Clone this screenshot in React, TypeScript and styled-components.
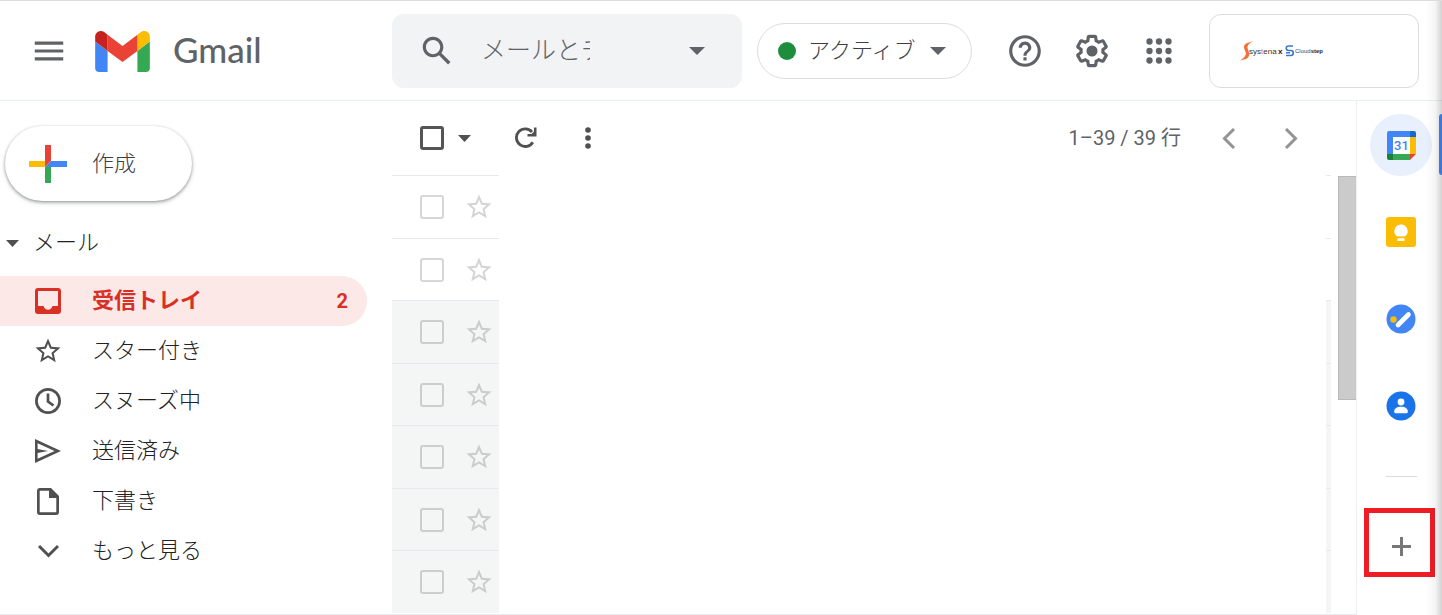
import React from 'react';
import styled, { createGlobalStyle } from 'styled-components';

const GlobalStyle = createGlobalStyle`
  *, *::before, *::after { box-sizing: border-box; }
  body {
    margin: 0;
    background: #fff;
    color: #202124;
    font-family: Roboto, "Noto Sans CJK JP", sans-serif;
    font-size: 22px;
    line-height: 32px;
    overflow: hidden;
  }
  button, input { font: inherit; color: inherit; }
  svg { display: block; flex: none; }
`;

const Page = styled.div`
  position: relative;
  display: flex;
  flex-direction: column;
  min-height: 100vh;
`;

const Header = styled.header`
  display: flex;
  align-items: center;
  padding: 13px 23px 12px 0;
  border-top: 1px solid #dadce0;
  border-bottom: 1px solid #e8eef3;
`;

const Brand = styled.div`
  display: flex;
  align-items: center;
  flex: none;
  width: 392px;
  padding-left: 30px;
`;

const IconButton = styled.button<{ $size?: number; $color?: string }>`
  display: flex;
  align-items: center;
  justify-content: center;
  flex: none;
  width: ${(p) => p.$size ?? 38}px;
  height: ${(p) => p.$size ?? 38}px;
  padding: 0;
  border: 0;
  background: none;
  color: ${(p) => p.$color ?? '#5f6368'};
  cursor: pointer;
`;

const HomeLink = styled.a`
  display: flex;
  align-items: center;
  gap: 23px;
  margin-left: 27px;
  color: #5f6368;
  font-family: Lato, sans-serif;
  font-size: 35px;
  font-weight: 500;
  line-height: 36px;
  text-decoration: none;
`;

const Wordmark = styled.span`
  padding-bottom: 4px;
`;

const SearchForm = styled.form`
  display: flex;
  align-items: center;
  flex: 1 1 0;
  min-width: 250px;
  height: 74px;
  padding: 0 26px;
  border-radius: 12px;
  background: #f1f3f4;
`;

const SearchInput = styled.input`
  flex: 1 1 0;
  min-width: 0;
  margin: 0 88px 0 25px;
  padding: 0;
  border: 0;
  outline: 0;
  background: none;
  font-size: 25px;
  font-weight: 300;
  line-height: 36px;
  &::placeholder { color: #5f6368; opacity: 1; }
`;

const StatusButton = styled.button`
  display: flex;
  align-items: center;
  flex: none;
  width: 215px;
  height: 56px;
  margin-left: 15px;
  padding: 0 0 0 20px;
  border: 1px solid #dadce0;
  border-radius: 28px;
  background: #fff;
  color: #3c4043;
  font-weight: 300;
  white-space: nowrap;
  cursor: pointer;
`;

const StatusDot = styled.span`
  width: 18px;
  height: 18px;
  margin-right: 12px;
  border-radius: 50%;
  background: #1e8e3e;
`;

const StatusLabel = styled.span`
  margin-right: 14px;
`;

const HeaderTools = styled.div`
  display: flex;
  gap: 29px;
  margin: 0 31px 0 34px;
`;

const Account = styled.button`
  display: flex;
  align-items: center;
  flex: none;
  width: 210px;
  height: 74px;
  padding: 0 0 0 30px;
  border: 1px solid #dadce0;
  border-radius: 12px;
  background: #fff;
  cursor: pointer;
`;

const Body = styled.div`
  display: flex;
  flex: 1;
`;

const Content = styled.div`
  display: flex;
  flex: 1;
  min-width: 0;
  border-bottom: 1px solid #e8eaed;
`;

const Sidebar = styled.nav`
  flex: none;
  width: 392px;
  padding-top: 25px;
`;

const ComposeButton = styled.button`
  display: flex;
  align-items: center;
  gap: 25px;
  width: 187px;
  height: 75px;
  margin-left: 5px;
  padding: 0 0 0 24px;
  border: 0;
  border-radius: 38px;
  background: #fff;
  color: #3c4043;
  font-weight: 300;
  box-shadow: 0 1px 3px rgba(60, 64, 67, 0.4), 0 2px 4px rgba(60, 64, 67, 0.25);
  cursor: pointer;
`;

const GroupButton = styled.button`
  display: flex;
  align-items: center;
  gap: 14px;
  margin: 26px 0 17px;
  padding: 0 0 0 6px;
  border: 0;
  background: none;
  font-weight: 300;
  cursor: pointer;
`;

const FolderList = styled.ul`
  margin: 0;
  padding: 0;
  list-style: none;
`;

const FolderLink = styled.a<{ $active?: boolean }>`
  display: flex;
  align-items: center;
  width: 367px;
  height: 50px;
  padding-right: 19px;
  border-radius: 0 25px 25px 0;
  background: ${(p) => (p.$active ? '#fce8e6' : 'none')};
  color: ${(p) => (p.$active ? '#d93025' : '#202124')};
  font-weight: ${(p) => (p.$active ? 700 : 300)};
  text-decoration: none;
`;

const FolderIcon = styled.span<{ $active?: boolean }>`
  display: flex;
  justify-content: center;
  width: 32px;
  margin: 0 28px 0 32px;
  color: ${(p) => (p.$active ? '#d93025' : '#505050')};
`;

const FolderCount = styled.span`
  margin-left: auto;
  font-size: 20px;
`;

const MailPane = styled.main`
  flex: 1;
  min-width: 0;
`;

const Toolbar = styled.div`
  display: flex;
  align-items: center;
  height: 74px;
  padding: 0 46px 0 28px;
  color: #5f6368;
`;

const CheckBox = styled.input<{ $strong?: boolean }>`
  appearance: none;
  flex: none;
  width: 24px;
  height: 24px;
  margin: 0;
  border: ${(p) => (p.$strong ? '3px solid #555' : '2px solid rgba(0, 0, 0, 0.16)')};
  border-radius: 3px;
  cursor: pointer;
`;

const Pager = styled.div`
  display: flex;
  align-items: center;
  gap: 24px;
  margin-left: auto;
`;

const PageRange = styled.span`
  margin-right: 5px;
  font-size: 20px;
  white-space: nowrap;
`;

const ListArea = styled.div`
  display: flex;
  align-items: flex-start;
`;

const MailList = styled.ul`
  flex: 1;
  margin: 0 7px 0 0;
  padding: 0;
  list-style: none;
`;

const MailRow = styled.li`
  display: flex;
  justify-content: space-between;
  height: 63px;
  &:nth-child(even) { height: 62px; }
`;

const RowControls = styled.div<{ $read?: boolean }>`
  display: flex;
  align-items: center;
  gap: 20px;
  width: 107px;
  padding-left: 28px;
  border-top: 1px solid #e6eaee;
  background: ${(p) => (p.$read ? '#f4f6f6' : '#fff')};
`;

const RowEdge = styled.div<{ $read?: boolean }>`
  width: 5px;
  border-top: 1px solid #e6eaee;
  background: ${(p) => (p.$read ? '#f4f6f6' : '#fff')};
`;

const ScrollThumb = styled.div`
  width: 18px;
  height: 224px;
  margin-top: 1px;
  border: 1px solid #b8b8b8;
  border-right: 0;
  background: #cbcbcb;
`;

const SidePanel = styled.aside`
  display: flex;
  flex-direction: column;
  align-items: center;
  flex: none;
  width: 86px;
  padding: 13px 0 0 3px;
  border-left: 1px solid #eceff1;
`;

const AppList = styled.div`
  display: flex;
  flex-direction: column;
  gap: 25px;
`;

const AppButton = styled(IconButton)<{ $active?: boolean }>`
  border-radius: 50%;
  background: ${(p) => (p.$active ? '#e8f0fe' : 'none')};
`;

const PanelDivider = styled.hr`
  width: 31px;
  margin: 39px 0 38px;
  border: 0;
  border-top: 1px solid #dadce0;
`;

const AddSlot = styled.div`
  position: relative;
`;

const Highlight = styled.span`
  position: absolute;
  top: -7px;
  left: -6px;
  width: 71px;
  height: 69px;
  border: 5px solid #ee1c24;
  pointer-events: none;
`;

const EdgeShade = styled.div`
  position: absolute;
  top: 1px;
  right: 0;
  bottom: 0;
  width: 17px;
  background: linear-gradient(to right, rgba(0, 0, 0, 0), rgba(0, 0, 0, 0.04) 60%, rgba(0, 0, 0, 0.18));
  pointer-events: none;
`;

const EdgeTab = styled.div`
  position: absolute;
  top: 114px;
  right: 0;
  width: 3px;
  height: 61px;
  border-radius: 3px 0 0 3px;
  background: #3c78dc;
`;

const Caret = ({ w, h, color = '#5f6368' }: { w: number; h: number; color?: string }) => (
  <svg width={w} height={h} viewBox="0 0 10 5" preserveAspectRatio="none" fill={color} aria-hidden="true">
    <path d="M0 0h10L5 5z" />
  </svg>
);

const Glyph = ({ d, size = 38 }: { d: string; size?: number }) => (
  <svg width={size} height={size} viewBox="0 0 24 24" fill="currentColor" aria-hidden="true">
    <path d={d} />
  </svg>
);

const MENU = 'M3 18h18v-2H3v2zm0-5h18v-2H3v2zm0-7v2h18V6H3z';
const SEARCH =
  'M20.49 19l-5.73-5.73C15.53 12.2 16 10.91 16 9.5 16 5.91 13.09 3 9.5 3S3 5.91 3 9.5 5.91 16 9.5 16c1.41 0 2.7-.47 3.77-1.24L19 20.49 20.49 19zM5 9.5C5 7.01 7.01 5 9.5 5S14 7.01 14 9.5 11.99 14 9.5 14 5 11.99 5 9.5z';
const HELP =
  'M11 18h2v-2h-2v2zm1-16C6.48 2 2 6.48 2 12s4.48 10 10 10 10-4.48 10-10S17.52 2 12 2zm0 18c-4.41 0-8-3.59-8-8s3.59-8 8-8 8 3.59 8 8-3.59 8-8 8zm0-14c-2.21 0-4 1.79-4 4h2c0-1.1.9-2 2-2s2 .9 2 2c0 2-3 1.75-3 5h2c0-2.25 3-2.5 3-5 0-2.21-1.79-4-4-4z';
const GEAR =
  'M13.85 22.25h-3.7c-.74 0-1.36-.54-1.45-1.27l-.27-1.89c-.27-.14-.53-.29-.79-.46l-1.8.72c-.7.26-1.47-.03-1.81-.65L2.2 15.53c-.35-.66-.2-1.44.36-1.88l1.53-1.19c-.01-.15-.02-.3-.02-.46 0-.15.01-.31.02-.46l-1.52-1.19c-.59-.45-.74-1.26-.37-1.88l1.85-3.19c.34-.62 1.11-.9 1.79-.63l1.81.73c.26-.17.52-.32.78-.46l.27-1.91c.09-.7.71-1.25 1.44-1.25h3.7c.74 0 1.36.54 1.45 1.27l.27 1.89c.27.14.53.29.79.46l1.8-.72c.71-.26 1.48.03 1.82.65l1.84 3.18c.36.66.2 1.44-.36 1.88l-1.52 1.19c.01.15.02.3.02.46s-.01.31-.02.46l1.52 1.19c.56.45.72 1.23.37 1.86l-1.86 3.22c-.34.62-1.11.9-1.8.63l-1.8-.72c-.26.17-.52.32-.78.46l-.27 1.91c-.1.68-.72 1.22-1.46 1.22zm-3.23-2h2.76l.37-2.55.53-.22c.44-.18.88-.44 1.34-.78l.45-.34 2.38.96 1.38-2.4-2.03-1.58.07-.56c.03-.26.06-.51.06-.78s-.03-.53-.06-.78l-.07-.56 2.03-1.58-1.39-2.4-2.39.96-.45-.35c-.42-.32-.87-.58-1.33-.77l-.52-.22-.37-2.55h-2.76l-.37 2.55-.53.21c-.44.19-.88.44-1.34.79l-.45.33-2.38-.95-1.39 2.39 2.03 1.58-.07.56a7 7 0 0 0-.06.79c0 .26.02.53.06.78l.07.56-2.03 1.58 1.38 2.4 2.39-.96.45.35c.43.33.86.58 1.33.77l.53.22.38 2.55zM12 8.5a3.5 3.5 0 1 0 0 7 3.5 3.5 0 0 0 0-7z';
const APPS = [6, 12, 18]
  .flatMap((y) => [6, 12, 18].map((x) => `M${x - 2} ${y}a2 2 0 1 0 4 0a2 2 0 1 0-4 0z`))
  .join('');
const STAR =
  'M22 9.24l-7.19-.62L12 2 9.19 8.63 2 9.24l5.46 4.73L5.82 21 12 17.27 18.18 21l-1.63-7.03L22 9.24zM12 15.4l-3.76 2.27 1-4.28-3.32-2.88 4.38-.38L12 6.1l1.71 4.04 4.38.38-3.32 2.88 1 4.28L12 15.4z';

const GmailMark = () => (
  <svg width="55" height="41" viewBox="52 42 88 66" aria-hidden="true">
    <path fill="#4285f4" d="M58 108h14V74L52 59v43c0 3.32 2.69 6 6 6" />
    <path fill="#34a853" d="M120 108h14c3.32 0 6-2.69 6-6V59l-20 15" />
    <path fill="#fbbc04" d="M120 48v26l20-15v-8c0-7.42-8.47-11.65-14.4-7.2" />
    <path fill="#ea4335" d="M72 74V48l24 18 24-18v26L96 92" />
    <path fill="#c5221f" d="M52 51v8l20 15V48l-5.6-4.2c-5.94-4.45-14.4-.22-14.4 7.2" />
  </svg>
);

const ComposePlus = () => (
  <svg width="38" height="38" viewBox="0 0 38 38" aria-hidden="true">
    <path fill="#ea4335" d="M16 0h6v16l-6 6z" />
    <path fill="#fbbc04" d="M0 16h16v6H0z" />
    <path fill="#4285f4" d="M22 16h16v6H16z" />
    <path fill="#34a853" d="M16 22h6v16h-6z" />
  </svg>
);

const InboxIcon = () => (
  <svg width="26" height="26" viewBox="0 0 26 26" fill="currentColor" fillRule="evenodd" aria-hidden="true">
    <path d="M3 0h20a3 3 0 0 1 3 3v20a3 3 0 0 1-3 3H3a3 3 0 0 1-3-3V3a3 3 0 0 1 3-3zM3 3v15h5.5c.6 2.4 2.3 3.8 4.5 3.8s3.9-1.4 4.5-3.8H23V3z" />
  </svg>
);

const ClockIcon = () => (
  <svg width="26" height="26" viewBox="0 0 26 26" fill="none" stroke="currentColor" strokeWidth="2.7" aria-hidden="true">
    <circle cx="13" cy="13" r="11.6" />
    <path d="M13 5.5v8l5.5 4" />
  </svg>
);

const SendIcon = () => (
  <svg width="28" height="24" viewBox="0 0 28 24" fill="currentColor" fillRule="evenodd" aria-hidden="true">
    <path d="M1 0l26 12L1 24zM3.6 4.2v5.900L14 12 3.600 13.900v5.900L20.600 12z" />
  </svg>
);

const FileIcon = () => (
  <svg width="22" height="27" viewBox="0 0 22 27" fill="currentColor" fillRule="evenodd" aria-hidden="true">
    <path d="M3 0h11l8 8v16a3 3 0 0 1-3 3H3a3 3 0 0 1-3-3V3a3 3 0 0 1 3-3zM2.700 2.700v21.600h16.600V10H12V2.700z" />
  </svg>
);

const Chevron = ({ d, w, h, stroke = 3 }: { d: string; w: number; h: number; stroke?: number }) => (
  <svg width={w} height={h} viewBox={`0 0 ${w} ${h}`} fill="none" stroke="currentColor" strokeWidth={stroke} aria-hidden="true">
    <path d={d} />
  </svg>
);

const RefreshIcon = () => (
  <svg width="22" height="22" viewBox="0 0 22 22" aria-hidden="true">
    <path d="M17.8 15.2A8.8 8.8 0 1 1 17 5" fill="none" stroke="currentColor" strokeWidth="2.8" />
    <path d="M21.5 .5v9h-9V7h4l2.500-2.500v-4z" fill="currentColor" />
  </svg>
);

const MoreIcon = () => (
  <svg width="22" height="22" viewBox="0 0 22 22" fill="currentColor" aria-hidden="true">
    <circle cx="11" cy="3" r="2.8" />
    <circle cx="11" cy="11" r="2.8" />
    <circle cx="11" cy="19" r="2.8" />
  </svg>
);

const CompanyLogo = () => (
  <svg width="90" height="22" viewBox="0 0 90 22" role="img" aria-label="systena x Cloudstep">
    <path fill="#f4703a" d="M13 1L6 3.500C3.500 5 3.500 8 5 10.500L6 13.500C5.500 16 4 18 0 20.500l6-1.500c3.500-1.500 4-5 2.500-8L7.500 8C7 5.500 9 3.500 13 1z" />
    <text x="9" y="14" fontFamily="'Liberation Sans', sans-serif" fontSize="8" fill="#333">
      sys<tspan fill="#f4703a">t</tspan>ena
    </text>
    <text x="38" y="14" fontFamily="'Liberation Sans', sans-serif" fontSize="8" fontWeight="700" fill="#222">
      x
    </text>
    <path fill="none" stroke="#3c78c0" strokeWidth="1.6" d="M53 6h-4.500c-3 0-3 4.500 0 4.500H51c3 0 3 5 0 5h-5M46 12.800h4" />
    <text x="55" y="13" fontFamily="'Liberation Sans', sans-serif" fontSize="6" fill="#3b4a66">
      Cloud<tspan fontWeight="700" fill="#1c2740">step</tspan>
    </text>
  </svg>
);

const CalendarIcon = () => (
  <svg width="29" height="29" viewBox="0 0 29 29" aria-hidden="true">
    <path fill="#fff" d="M5 5h18v18H5z" />
    <path fill="#4285f4" d="M2 0h21v6H6v17H0V2a2 2 0 0 1 2-2z" />
    <path fill="#1967d2" d="M23 0h4a2 2 0 0 1 2 2v4h-6z" />
    <path fill="#fbbc04" d="M23 6h6v17h-6z" />
    <path fill="#34a853" d="M6 23h17v6H6z" />
    <path fill="#188038" d="M0 23h6v6H2a2 2 0 0 1-2-2z" />
    <path fill="#ea4335" d="M23 23h6l-6 6z" />
    <text x="14.5" y="19" textAnchor="middle" fontFamily="Roboto, sans-serif" fontSize="13" fontWeight="500" fill="#4285f4">
      31
    </text>
  </svg>
);

const KeepIcon = () => (
  <svg width="30" height="30" viewBox="0 0 30 30" aria-hidden="true">
    <rect width="30" height="30" rx="3" fill="#fbbc04" />
    <path fill="#fff" d="M15 7.500a6.600 6.600 0 0 0-3.500 12.200h7A6.600 6.600 0 0 0 15 7.500zM11.500 21.300h7v2.700h-7z" />
    <path fill="#fbbc04" d="M11 19.500h8v1.300h-8z" />
  </svg>
);

const TasksIcon = () => (
  <svg width="30" height="30" viewBox="0 0 30 30" aria-hidden="true">
    <circle cx="15" cy="15" r="14.5" fill="#4285f4" />
    <circle cx="7.5" cy="15.5" r="3.2" fill="#fbbc04" />
    <path d="M12 21L22.500 10.500" stroke="#fff" strokeWidth="4.6" strokeLinecap="round" />
  </svg>
);

const ContactsIcon = () => (
  <svg width="30" height="30" viewBox="0 0 30 30" aria-hidden="true">
    <circle cx="15" cy="15" r="14.5" fill="#1a73e8" />
    <circle cx="15" cy="11" r="3.4" fill="#fff" />
    <path fill="#fff" d="M8.200 20.500c0-3.300 3.500-4.700 6.800-4.700s6.800 1.400 6.800 4.700c0 1-.6 1.800-1.600 1.800H9.800c-1 0-1.600-.8-1.600-1.800z" />
  </svg>
);

const folders = [
  { label: '受信トレイ', icon: <InboxIcon />, count: 2 },
  { label: 'スター付き', icon: <Glyph d={STAR} size={30} /> },
  { label: 'スヌーズ中', icon: <ClockIcon /> },
  { label: '送信済み', icon: <SendIcon /> },
  { label: '下書き', icon: <FileIcon /> },
  { label: 'もっと見る', icon: <Chevron d="M1 2l9.500 9.500L20 2" w={21} h={14} /> },
];

const apps = [
  { label: 'カレンダー', icon: <CalendarIcon /> },
  { label: 'Keep', icon: <KeepIcon /> },
  { label: 'ToDo リスト', icon: <TasksIcon /> },
  { label: '連絡先', icon: <ContactsIcon /> },
];

const mailRows = [false, false, true, true, true, true, true];

export default function App() {
  return (
    <Page>
      <GlobalStyle />
      <Header>
        <Brand>
          <IconButton aria-label="メインメニュー"><Glyph d={MENU} /></IconButton>
          <HomeLink href="#">
            <GmailMark />
            <Wordmark>Gmail</Wordmark>
          </HomeLink>
        </Brand>
        <SearchForm role="search">
          <IconButton type="button" aria-label="検索"><Glyph d={SEARCH} /></IconButton>
          <SearchInput type="text" placeholder="メールとチャットを検索" aria-label="メールとチャットを検索" />
          <IconButton type="button" aria-label="検索オプション" $size={38}><Caret w={16} h={8} /></IconButton>
        </SearchForm>
        <StatusButton>
          <StatusDot />
          <StatusLabel>アクティブ</StatusLabel>
          <Caret w={16} h={8} />
        </StatusButton>
        <HeaderTools>
          <IconButton aria-label="サポート"><Glyph d={HELP} /></IconButton>
          <IconButton aria-label="設定"><Glyph d={GEAR} /></IconButton>
          <IconButton aria-label="アプリ"><Glyph d={APPS} /></IconButton>
        </HeaderTools>
        <Account><CompanyLogo /></Account>
      </Header>
      <Body>
        <Content>
          <Sidebar>
            <ComposeButton><ComposePlus />作成</ComposeButton>
            <GroupButton><Caret w={13} h={7} color="#505050" />メール</GroupButton>
            <FolderList>
              {folders.map((f, i) => (
                <li key={f.label}>
                  <FolderLink href="#" $active={i === 0}>
                    <FolderIcon $active={i === 0}>{f.icon}</FolderIcon>
                    {f.label}
                    {f.count && <FolderCount>{f.count}</FolderCount>}
                  </FolderLink>
                </li>
              ))}
            </FolderList>
          </Sidebar>
          <MailPane>
            <Toolbar>
              <CheckBox type="checkbox" $strong aria-label="すべて選択" />
              <IconButton $size={40} aria-label="選択"><Caret w={13} h={7} color="#505050" /></IconButton>
              <IconButton $size={84} $color="#505050" aria-label="更新"><RefreshIcon /></IconButton>
              <IconButton $size={40} $color="#505050" aria-label="その他"><MoreIcon /></IconButton>
              <Pager>
                <PageRange>1–39 / 39 行</PageRange>
                <IconButton $color="#949494" aria-label="前へ"><Chevron d="M12 1l-9.500 9.500L12 20" w={14} h={21} /></IconButton>
                <IconButton $color="#949494" aria-label="次へ"><Chevron d="M2 1l9.500 9.500L2 20" w={14} h={21} /></IconButton>
              </Pager>
            </Toolbar>
            <ListArea>
              <MailList>
                {mailRows.map((read, i) => (
                  <MailRow key={i}>
                    <RowControls $read={read}>
                      <CheckBox type="checkbox" aria-label={`メール ${i + 1} を選択`} />
                      <IconButton $size={30} $color="rgba(0, 0, 0, 0.17)" aria-label="スターを付ける">
                        <Glyph d={STAR} size={30} />
                      </IconButton>
                    </RowControls>
                    <RowEdge $read={read} />
                  </MailRow>
                ))}
              </MailList>
              <ScrollThumb />
            </ListArea>
          </MailPane>
        </Content>
        <SidePanel>
          <AppList>
            {apps.map((a, i) => (
              <AppButton key={a.label} $size={62} $active={i === 0} aria-label={a.label}>{a.icon}</AppButton>
            ))}
          </AppList>
          <PanelDivider />
          <AddSlot>
            <IconButton $size={62} $color="#777" aria-label="アドオンを取得">
              <Chevron d="M9.500 0v19M0 9.500h19" w={19} h={19} />
            </IconButton>
            <Highlight />
          </AddSlot>
        </SidePanel>
      </Body>
      <EdgeShade />
      <EdgeTab />
    </Page>
  );
}
